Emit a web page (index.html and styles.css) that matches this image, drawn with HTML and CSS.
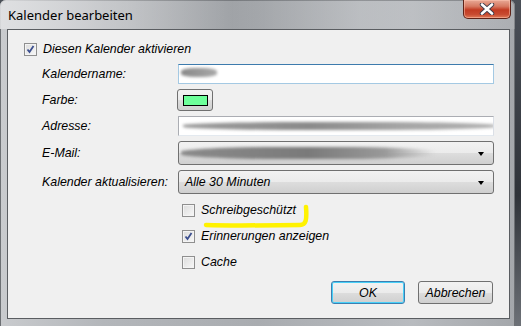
FILE: index.html
```html
<!DOCTYPE html>
<html lang="de">
<head>
    <meta charset="UTF-8">
    <title>Kalender bearbeiten</title>
    <link rel="stylesheet" href="styles.css">
</head>
<body>
<div class="window">
    <div class="titlebar">
        <span class="title">Kalender bearbeiten</span>
        <button class="close-btn">
            <svg width="16" height="12" viewBox="0 0 16 12">
                <path d="M3 1.5 L13 10.5 M13 1.5 L3 10.5" stroke="#3b3b4a" stroke-width="4.4" stroke-linecap="round"/>
                <path d="M3 1.5 L13 10.5 M13 1.5 L3 10.5" stroke="#ffffff" stroke-width="2.6" stroke-linecap="round"/>
            </svg>
        </button>
    </div>

    <div class="client">
        <!-- enable calendar -->
        <label class="check-row top-check">
            <span class="checkbox checked"><svg width="9" height="9" viewBox="0 0 9 9"><path d="M1.5 4.5 L3.5 7 L7.5 1" fill="none" stroke="#3c4f8f" stroke-width="1.8"/></svg></span>
            Diesen Kalender aktivieren
        </label>

        <div class="form">
            <label>Kalendername:</label>
            <div class="textbox focused"><span class="smudge smudge-name"></span></div>

            <label>Farbe:</label>
            <div><button class="color-btn"><span class="swatch"></span></button></div>

            <label>Adresse:</label>
            <div class="textbox"><span class="smudge smudge-url"></span></div>

            <label>E-Mail:</label>
            <div class="combo"><span class="smudge smudge-mail"></span><span class="arrow"></span></div>

            <label>Kalender aktualisieren:</label>
            <div class="combo"><span class="combo-text">Alle 30 Minuten</span><span class="arrow"></span></div>
        </div>

        <div class="options">
            <label class="check-row">
                <span class="checkbox"></span>
                Schreibgeschützt
            </label>
            <label class="check-row">
                <span class="checkbox checked"><svg width="9" height="9" viewBox="0 0 9 9"><path d="M1.5 4.5 L3.5 7 L7.5 1" fill="none" stroke="#3c4f8f" stroke-width="1.8"/></svg></span>
                Erinnerungen anzeigen
            </label>
            <label class="check-row">
                <span class="checkbox"></span>
                Cache
            </label>
        </div>

        <div class="buttons">
            <button class="btn btn-default">OK</button>
            <button class="btn">Abbrechen</button>
        </div>

        <!-- yellow marker annotation -->
        <svg class="marker" width="120" height="30" viewBox="0 0 120 30">
            <path d="M6 21 C40 22 80 21 100 21 C106 21 107 16 106 3" fill="none" stroke="#fff200" stroke-width="4.5" stroke-linecap="round"/>
        </svg>
    </div>
</div>
</body>
</html>
```

FILE: styles.css
```css
body {
    margin: 0;
    width: 521px;
    height: 326px;
    overflow: hidden;
    background: linear-gradient(to bottom, #4b5058, #2f3339 60%, #6d7177);
    font-family: "Liberation Sans", Arial, sans-serif;
    font-size: 12.4px;
}
.window {
    position: relative;
    width: 515px;
    height: 330px;
    border-radius: 6px 6px 0 0;
    background: linear-gradient(to right, #c9cbce 0%, #b3b6ba 20%, #a9acb0 50%, #b8bbbf 80%, #a4a7ab 100%);
    box-shadow: inset 0 0 0 1px #6d7074;
    display: flex;
    flex-direction: column;
}
.titlebar {
    height: 29px;
    display: flex;
    align-items: flex-start;
    justify-content: space-between;
    padding-left: 8px;
    background: linear-gradient(to right, rgba(225, 226, 228, 0.9) 0%, rgba(210, 211, 213, 0.5) 25%, rgba(140, 143, 147, 0.35) 45%, rgba(200, 202, 205, 0.4) 70%, rgba(190, 192, 195, 0.3) 100%);
    border-radius: 6px 6px 0 0;
}
.title {
    font-family: "Noto Sans", "Open Sans", sans-serif;
    font-size: 13px;
    color: #000;
    margin-top: 6px;
}
.close-btn {
    width: 48px;
    height: 19px;
    margin-right: 4px;
    padding: 0;
    border: 1px solid #5e2318;
    border-top: none;
    border-radius: 0 0 5px 5px;
    background: linear-gradient(to bottom, #e8a996 0%, #d77a62 35%, #c23b22 55%, #c84a30 80%, #e07a58 100%);
    box-shadow: inset 0 0 0 1px rgba(255, 200, 180, 0.5);
    display: flex;
    align-items: center;
    justify-content: center;
}
.client {
    position: relative;
    margin: 0 5px 0 7px;
    height: 290px;
    box-sizing: border-box;
    background: #f0f0f0;
    border: 1px solid #5a5d61;
    padding: 9px 16px 0 16px;
}
.check-row {
    display: flex;
    align-items: center;
    gap: 6px;
    height: 20px;
    font-style: italic;
    color: #000;
}
.checkbox {
    width: 11px;
    height: 11px;
    border: 1px solid #8f8f8f;
    background: linear-gradient(135deg, #dcdcdc, #f8f8f8);
    box-shadow: inset 0 0 0 1px #f4f4f4;
    display: flex;
    align-items: center;
    justify-content: center;
    flex: none;
}
.form {
    display: grid;
    grid-template-columns: 136px 316px;
    grid-template-rows: 20px 22px 20px 24px 24px;
    row-gap: 5px;
    margin-top: 5px;
    padding-left: 18px;
}
.form label {
    font-style: italic;
    display: flex;
    align-items: center;
}
.textbox {
    position: relative;
    box-sizing: border-box;
    background: #fff;
    border: 1px solid #abadb3;
    border-bottom-color: #e3e9ef;
    border-right-color: #dbdfe6;
    overflow: hidden;
}
.textbox.focused {
    border-color: #a4c9e3;
    border-top-color: #3d7bad;
}
.smudge {
    position: absolute;
    border-radius: 40%;
    filter: blur(1.5px);
}
.smudge-name {
    left: 2px;
    top: 3px;
    width: 36px;
    height: 9px;
    background: linear-gradient(to right, #888, #a8a8a8);
}
.smudge-url {
    left: 4px;
    top: 5px;
    width: 312px;
    height: 8px;
    background: linear-gradient(to right, #9c9c9c, #8a8a8a 40%, #a5a5a5 70%, #b0b0b0);
}
.smudge-mail {
    left: 2px;
    top: 5px;
    width: 255px;
    height: 12px;
    background: linear-gradient(to right, #8a8a8a, #7a7a7a 50%, #999 80%, rgba(180, 180, 180, 0));
}
.color-btn {
    margin-left: -1px;
    width: 36px;
    height: 22px;
    padding: 0;
    border: 1px solid #707070;
    border-radius: 3px;
    background: linear-gradient(to bottom, #f2f2f2 0%, #ebebeb 50%, #dddddd 51%, #cfcfcf 100%);
    display: flex;
    align-items: center;
    justify-content: center;
}
.swatch {
    width: 23px;
    height: 9px;
    border: 1px solid #000;
    background: #6dff9a;
}
.combo {
    position: relative;
    box-sizing: border-box;
    border: 1px solid #707070;
    border-radius: 3px;
    background: linear-gradient(to bottom, #f2f2f2 0%, #ebebeb 50%, #dddddd 51%, #cfcfcf 100%);
    display: flex;
    align-items: center;
    overflow: hidden;
}
.combo-text {
    font-style: italic;
    padding-left: 6px;
}
.arrow {
    position: absolute;
    right: 9px;
    top: 10px;
    border-left: 3.5px solid transparent;
    border-right: 3.5px solid transparent;
    border-top: 4px solid #000;
}
.options {
    display: flex;
    flex-direction: column;
    gap: 6px;
    margin-top: 6px;
    padding-left: 158px;
}
.buttons {
    display: flex;
    justify-content: flex-end;
    gap: 13px;
    margin-top: 9px;
}
.btn {
    height: 23px;
    width: 75px;
    border: 1px solid #707070;
    border-radius: 3px;
    background: linear-gradient(to bottom, #f2f2f2 0%, #ebebeb 50%, #dddddd 51%, #cfcfcf 100%);
    font-family: "Liberation Sans", Arial, sans-serif;
    font-size: 12.4px;
    font-style: italic;
    color: #000;
    padding: 0;
}
.btn-default {
    width: 74px;
    border-color: #3c7fb1;
    box-shadow: inset 0 0 0 1px #48d0f8;
}
.marker {
    position: absolute;
    left: 192px;
    top: 174px;
}
```
